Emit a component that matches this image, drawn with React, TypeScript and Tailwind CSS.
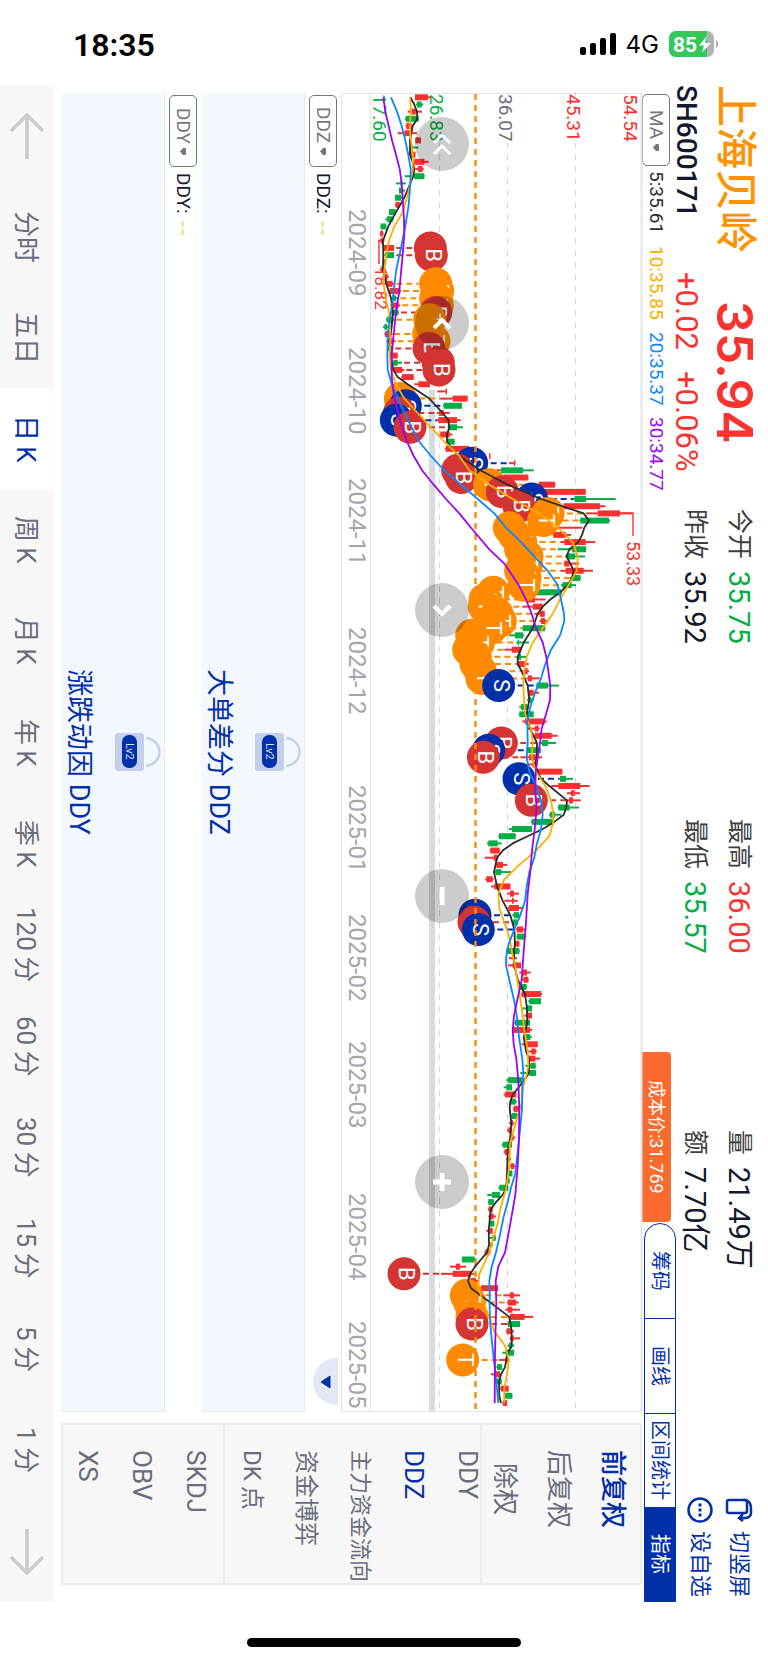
import { Fragment } from 'react';
import type { ReactNode } from 'react';

type Candle = ['r' | 'g', number, number, number, number];
type Point = [number, number];

const UP = '#f93030';
const DOWN = '#06ae46';

// colour, low, body start, body end, high
const candles: Candle[] = [
  ['r', 162, 162, 201, 210], ['g', 165, 168, 182, 187], ['r', 140, 152, 164, 183], ['g', 132, 134, 173, 173],
  ['r', 134, 136, 152, 152], ['r', 110, 131, 146, 168], ['r', 163, 163, 180, 180], ['g', 145, 147, 155, 172],
  ['r', 145, 148, 163, 163], ['r', 160, 160, 190, 203], ['r', 163, 171, 185, 188], ['g', 131, 160, 190, 190],
  ['g', 105, 118, 124, 134], ['g', 113, 114, 126, 132], ['g', 102, 102, 121, 124], ['r', 102, 104, 116, 120],
  ['g', 84, 84, 104, 106], ['g', 73, 78, 95, 98], ['g', 58, 59, 76, 76], ['r', 56, 58, 66, 68],
  ['r', 52, 60, 66, 70], ['r', 68, 69, 99, 100], ['g', 70, 72, 99, 100], ['g', 64, 66, 74, 76],
  ['r', 56, 60, 70, 74], ['r', 64, 66, 80, 84], ['r', 74, 78, 95, 100], ['r', 82, 86, 118, 120],
  ['g', 90, 95, 105, 112], ['r', 88, 95, 113, 118], ['g', 90, 94, 112, 114], ['g', 75, 77, 97, 100],
  ['g', 66, 70, 78, 84], ['r', 70, 72, 92, 94], ['r', 76, 84, 96, 104], ['g', 78, 82, 94, 97],
  ['r', 88, 94, 110, 110], ['g', 90, 97, 110, 123], ['r', 94, 99, 124, 130], ['r', 121, 123, 158, 158],
  ['r', 160, 172, 207, 207], ['r', 229, 254, 258, 258], ['r', 236, 275, 320, 320], ['g', 246, 248, 303, 303],
  ['r', 228, 234, 248, 266], ['r', 230, 232, 288, 299], ['g', 260, 262, 288, 306], ['r', 236, 238, 266, 274],
  ['g', 256, 258, 281, 281], ['r', 252, 254, 324, 324], ['r', 384, 384, 388, 388], ['r', 444, 459, 463, 463],
  ['g', 418, 420, 486, 518], ['r', 426, 428, 502, 502], ['r', 532, 533, 582, 584], ['r', 548, 550, 674, 674],
  ['g', 636, 641, 675, 764], ['r', 606, 608, 717, 733], ['r', 675, 710, 777, 816], ['g', 656, 658, 744, 748],
  ['r', 554, 555, 583, 664], ['r', 575, 577, 614, 630], ['r', 600, 610, 674, 703], ['g', 590, 634, 675, 676],
  ['g', 612, 616, 642, 672], ['r', 608, 610, 625, 654], ['r', 600, 614, 668, 696], ['g', 626, 632, 658, 660],
  ['g', 600, 604, 632, 645], ['g', 504, 506, 602, 602], ['r', 483, 495, 522, 554], ['r', 484, 516, 545, 546],
  ['r', 520, 536, 551, 552], ['r', 536, 540, 552, 558], ['g', 484, 485, 552, 554], ['g', 444, 462, 486, 490],
  ['g', 466, 470, 474, 504], ['r', 430, 452, 480, 482], ['g', 466, 472, 480, 495], ['r', 466, 470, 491, 503],
  ['r', 488, 492, 500, 504], ['r', 497, 501, 513, 536], ['g', 524, 527, 561, 594], ['r', 500, 503, 518, 534],
  ['g', 498, 503, 511, 518], ['g', 475, 480, 500, 502], ['g', 474, 475, 518, 518], ['r', 484, 492, 551, 557],
  ['r', 500, 522, 533, 536], ['r', 518, 521, 572, 590], ['g', 540, 543, 561, 585], ['g', 495, 497, 539, 540],
  ['r', 478, 504, 524, 543], ['r', 500, 514, 522, 530], ['r', 523, 525, 604, 604], ['g', 595, 597, 615, 636],
  ['r', 570, 592, 658, 686], ['r', 618, 630, 641, 657], ['r', 610, 624, 636, 659], ['g', 590, 592, 626, 654],
  ['g', 564, 567, 582, 600], ['g', 510, 512, 578, 578], ['g', 444, 453, 513, 513], ['g', 412, 414, 464, 464],
  ['g', 378, 382, 410, 422], ['r', 386, 388, 416, 416], ['r', 371, 398, 410, 412], ['r', 404, 406, 426, 438],
  ['g', 402, 404, 421, 450], ['r', 373, 376, 395, 398], ['r', 390, 400, 448, 448], ['r', 438, 447, 459, 474],
  ['r', 430, 453, 458, 470], ['r', 440, 444, 474, 487], ['g', 454, 458, 474, 476], ['g', 453, 456, 470, 471],
  ['r', 465, 468, 486, 496], ['g', 466, 468, 492, 496], ['r', 458, 460, 475, 475], ['g', 436, 436, 475, 476],
  ['r', 444, 455, 460, 468], ['r', 440, 455, 480, 480], ['r', 475, 484, 498, 509], ['r', 484, 488, 502, 503],
  ['g', 474, 476, 497, 497], ['r', 480, 482, 540, 543], ['g', 502, 505, 540, 540], ['g', 482, 496, 513, 513],
  ['r', 490, 497, 513, 513], ['g', 460, 462, 507, 507], ['r', 455, 456, 507, 514], ['g', 490, 494, 508, 512],
  ['r', 482, 493, 530, 530], ['r', 502, 511, 524, 527], ['r', 500, 504, 523, 537], ['g', 493, 508, 524, 524],
  ['g', 478, 505, 525, 525], ['g', 436, 441, 484, 484], ['g', 428, 436, 453, 453], ['r', 428, 432, 466, 466],
  ['g', 446, 450, 464, 468], ['r', 456, 458, 474, 474], ['g', 448, 452, 468, 468], ['r', 444, 450, 456, 460],
  ['r', 438, 442, 452, 452], ['r', 446, 450, 458, 462], ['g', 422, 425, 453, 453], ['r', 428, 431, 448, 448],
  ['r', 436, 442, 448, 450], ['r', 444, 450, 460, 464], ['g', 438, 441, 454, 454], ['g', 436, 440, 446, 446],
  ['g', 412, 415, 442, 442], ['g', 379, 393, 417, 417], ['g', 381, 382, 399, 399], ['r', 381, 383, 395, 395],
  ['r', 382, 386, 398, 405], ['g', 386, 387, 400, 400], ['r', 376, 384, 395, 395], ['g', 386, 394, 404, 405],
  ['g', 385, 388, 392, 396], ['r', 370, 373, 386, 389], ['g', 302, 303, 341, 347], ['r', 267, 285, 297, 315],
  ['r', 240, 275, 330, 340], ['r', 320, 328, 345, 352], ['r', 358, 360, 411, 411], ['r', 427, 446, 459, 477],
  ['r', 438, 441, 465, 473], ['r', 433, 440, 454, 477], ['r', 440, 447, 491, 517], ['g', 438, 441, 477, 477],
  ['r', 435, 437, 452, 459], ['r', 446, 448, 458, 477], ['g', 440, 444, 454, 460], ['g', 424, 434, 459, 459],
  ['r', 414, 433, 440, 440], ['g', 406, 408, 423, 423], ['r', 390, 402, 417, 417], ['g', 406, 408, 422, 422],
  ['r', 416, 420, 443, 443], ['g', 428, 431, 454, 454], ['r', 424, 426, 438, 438],
];

const ma5: Point[] = [
  [0, 148], [1, 160], [2, 168], [3, 169], [4, 155], [6, 147], [8, 147], [9, 155], [10, 160], [11, 157], [12, 148], [14, 130],
  [16, 105], [18, 82], [20, 66], [22, 67], [24, 66], [26, 76], [28, 90], [30, 96], [32, 92], [34, 84], [36, 90], [38, 97],
  [39, 110], [40, 140], [42, 205], [44, 245], [45, 262], [46, 265], [47, 258], [48, 258], [49, 272], [50, 295], [52, 358],
  [54, 440], [56, 540], [58, 668], [59, 684], [60, 670], [61, 663], [62, 652], [63, 625], [64, 617], [65, 628], [66, 638],
  [67, 633], [68, 620], [69, 598], [70, 568], [71, 545], [72, 530], [74, 515], [76, 488], [78, 470], [79, 470], [80, 482],
  [82, 500], [84, 505], [86, 497], [88, 507], [90, 528], [92, 527], [93, 522], [94, 530], [95, 540], [96, 565], [98, 618],
  [99, 616], [100, 608], [101, 580], [102, 545], [103, 500], [104, 455], [105, 425], [106, 408], [108, 399], [110, 408],
  [112, 425], [114, 448], [116, 460], [118, 462], [119, 459], [121, 460], [123, 470], [125, 492], [127, 498], [129, 499],
  [131, 488], [133, 495], [134, 504], [136, 504], [137, 490], [138, 473], [139, 455], [140, 448], [141, 446], [143, 451],
  [145, 448], [147, 440], [150, 438], [152, 436], [153, 425], [154, 405], [155, 390], [156, 387], [158, 383], [160, 384],
  [161, 378], [162, 360], [163, 342], [164, 328], [165, 321], [166, 330], [168, 388], [170, 445], [172, 452], [174, 452],
  [175, 440], [177, 432], [178, 420], [179, 414], [181, 415], [182, 420],
];

const ma10: Point[] = [
  [0, 147], [2, 150], [4, 146], [6, 150], [8, 155], [10, 155], [12, 148], [14, 138], [16, 125], [18, 100], [20, 84], [22, 76],
  [24, 70], [26, 68], [28, 74], [30, 84], [32, 87], [34, 88], [36, 86], [38, 90], [40, 105], [42, 130], [44, 170], [46, 210],
  [48, 250], [50, 295], [52, 325], [54, 385], [56, 455], [58, 535], [60, 590], [62, 635], [64, 650], [66, 648], [68, 622],
  [70, 597], [72, 575], [74, 545], [76, 515], [78, 497], [80, 490], [82, 487], [84, 489], [86, 493], [88, 510], [90, 515],
  [92, 512], [94, 525], [96, 553], [98, 570], [100, 577], [101, 577], [103, 565], [105, 525], [107, 475], [109, 430],
  [111, 412], [113, 415], [116, 437], [117, 445], [119, 452], [121, 462], [124, 472], [127, 482], [130, 490], [133, 500],
  [135, 502], [136, 498], [138, 486], [140, 483], [142, 470], [144, 458], [146, 446], [149, 445], [152, 436], [155, 418],
  [157, 410], [159, 397], [161, 385], [163, 365], [164, 355], [166, 352], [168, 368], [170, 384], [172, 400], [174, 432],
  [176, 444], [178, 438], [180, 430], [182, 430],
];

const ma20: Point[] = [
  [0, 90], [2, 108], [4, 122], [6, 133], [8, 142], [10, 149], [12, 148], [15, 143], [18, 133], [21, 120], [24, 106], [27, 98],
  [30, 90], [33, 80], [36, 79], [38, 80], [40, 92], [43, 120], [46, 152], [48, 175], [50, 210], [52, 250], [54, 300],
  [56, 350], [58, 400], [60, 435], [62, 480], [64, 520], [66, 560], [68, 590], [70, 600], [72, 609], [73, 610], [75, 597],
  [77, 570], [79, 553], [81, 540], [83, 522], [85, 508], [87, 499], [90, 500], [92, 497], [94, 505], [96, 525], [98, 540],
  [100, 545], [102, 540], [104, 528], [106, 520], [108, 505], [110, 497], [112, 492], [114, 478], [116, 460], [118, 443],
  [120, 435], [121, 435], [123, 445], [126, 460], [128, 467], [131, 474], [134, 484], [136, 487], [138, 484], [141, 483],
  [144, 477], [147, 470], [150, 463], [152, 450], [154, 440], [156, 428], [159, 415], [161, 405], [163, 392], [165, 385],
  [167, 386], [169, 386], [171, 388], [174, 394], [177, 401], [180, 408], [182, 412],
];

const ma30: Point[] = [
  [0, 67], [2, 73], [4, 83], [6, 93], [8, 105], [10, 116], [12, 122], [14, 125], [17, 129], [19, 130], [21, 127], [24, 121],
  [27, 115], [30, 105], [33, 98], [36, 92], [39, 92], [42, 100], [44, 112], [46, 123], [48, 138], [50, 158], [52, 183],
  [54, 218], [56, 255], [58, 295], [60, 330], [63, 385], [65, 430], [68, 473], [70, 495], [72, 512], [74, 525], [76, 545],
  [78, 556], [80, 562], [82, 568], [84, 567], [86, 555], [88, 542], [90, 537], [92, 530], [94, 524], [97, 523], [99, 527],
  [102, 521], [105, 513], [108, 508], [111, 500], [115, 495], [119, 488], [123, 482], [126, 468], [128, 459], [130, 455],
  [132, 458], [134, 466], [137, 472], [141, 475], [145, 474], [149, 470], [153, 463], [157, 448], [159, 440], [161, 432],
  [163, 412], [165, 404], [168, 406], [171, 404], [175, 402], [182, 401],
];

// candle index, price position, trade type
const trades: [number, number, 'B' | 'S' | 'T'][] = [
  [21, 208, 'B'], [22, 211, 'B'], [26, 224, 'T'], [27, 230, 'T'], [28, 224, 'T'], [29, 229, 'T'], [30, 224, 'B'],
  [31, 206, 'T'], [33, 203, 'T'], [34, 219, 'T'], [35, 204, 'B'], [37, 232, 'B'], [38, 234, 'B'], [42, 118, 'T'],
  [43, 133, 'S'], [44, 115, 'B'], [45, 106, 'S'], [46, 147, 'B'], [51, 332, 'S'], [52, 290, 'B'], [53, 301, 'B'],
  [54, 386, 'T'], [55, 424, 'B'], [56, 512, 'S'], [57, 474, 'B'], [58, 561, 'T'], [59, 548, 'T'], [60, 445, 'T'],
  [61, 460, 'T'], [62, 479, 'T'], [63, 479, 'T'], [64, 498, 'T'], [65, 497, 'T'], [66, 479, 'T'], [67, 492, 'T'],
  [68, 489, 'T'], [69, 397, 'T'], [70, 372, 'T'], [71, 370, 'T'], [72, 408, 'T'], [73, 418, 'T'], [74, 390, 'T'],
  [75, 332, 'T'], [76, 352, 'T'], [77, 323, 'T'], [78, 343, 'T'], [79, 345, 'T'], [80, 358, 'T'], [81, 363, 'T'],
  [82, 413, 'S'], [90, 421, 'B'], [91, 383, 'S'], [92, 367, 'B'], [95, 474, 'S'], [98, 511, 'B'], [114, 342, 'S'],
  [115, 339, 'B'], [116, 352, 'S'], [164, 129, 'B'], [167, 316, 'T'], [168, 326, 'T'], [170, 333, 'T'],
  [171, 333, 'B'], [176, 305, 'T'],
];

const tradeColors = { B: '#d43434', S: '#0230a8', T: '#ff8a00' };

const months: [string, number][] = [
  ['2024-09', 209], ['2024-10', 347], ['2024-11', 478], ['2024-12', 627], ['2025-01', 785],
  ['2025-02', 914], ['2025-03', 1041], ['2025-04', 1193], ['2025-05', 1321],
];

const priceLabels: [string, number, string][] = [
  ['54.54', 623, UP], ['45.31', 566, UP], ['36.07', 498, '#6b6d7c'], ['26.83', 429, DOWN], ['17.60', 372, DOWN],
];

const periods = ['分时', '五日', '日\u2009K', '周\u2009K', '月\u2009K', '年\u2009K', '季\u2009K', '120\u2009分', '60\u2009分', '30\u2009分', '15\u2009分', '5\u2009分', '1\u2009分'];

const px = (t: number) => 360 + t / 3;
const py = (i: number) => 97.3 + i * 7.174;
const line = (points: Point[]) => points.map(([i, t]) => `${px(t).toFixed(1)},${py(i).toFixed(1)}`).join(' ');

function Label({ x, y, size, fill, children }: { x: number; y: number; size: number; fill: string; children: ReactNode }) {
  return (
    <text transform={`translate(${x} ${y}) rotate(90)`} fontSize={size} fill={fill}>
      {children}
    </text>
  );
}

function KLineChart() {
  return (
    <svg viewBox="340 93 301 1319" className="block h-full w-full overflow-visible [writing-mode:horizontal-tb]" role="img" aria-label="日K">
      {/* Frame and grid */}
      <path d="M340.5 93.5H641M340.5 93v1319M369.5 93v1319M340 1411.5h301" stroke="#e4e5e7" fill="none" />
      <path d="M640.5 93v1319" stroke="#e4e5e7" strokeWidth="2" />
      <path d="M438.5 94v1318M506.5 94v1318M574.5 94v1318" stroke="#d3d6da" strokeDasharray="6 6" />
      <rect x="428" y="390" width="6" height="1022" fill="#d6dbdf" />

      {priceLabels.map(([text, x, fill]) => (
        <Fragment key={text}>
          <rect x={x - 2} y="95" width="17" height="48" fill="#fff" />
          <Label x={x} y={94} size={19} fill={fill}>{text}</Label>
        </Fragment>
      ))}
      {months.map(([text, y]) => (
        <Label key={text} x={348} y={y} size={24} fill="#a5a5ad">{text}</Label>
      ))}

      {/* Candles */}
      {candles.map(([c, low, a, b, high], i) => (
        <g key={i} fill={c === 'r' ? UP : DOWN}>
          <rect x={px(low)} y={py(i) - 1} width={(high - low) / 3} height="2" />
          <rect x={px(a)} y={py(i) - 3} width={(b - a) / 3} height="6" />
        </g>
      ))}

      {/* High and low */}
      <path d="M618 513.3h14V536M382 238l-4 3v23" stroke={UP} strokeWidth="1.4" fill="none" />
      <Label x={626} y={541} size={18} fill={UP}>53.33</Label>
      <Label x={374} y={267} size={17} fill={UP}>18.82</Label>

      {/* Trades */}
      {trades.map(([i, t, type]) => {
        const [, low, , , high] = candles[i];
        const above = t > high;
        return (
          <line
            key={i}
            x1={above ? px(high) + 2 : px(t) + 19}
            x2={above ? px(t) - 17 : Math.max(px(low), px(t) + 19)}
            y1={py(i)}
            y2={py(i)}
            stroke={tradeColors[type]}
            strokeWidth="2"
            strokeDasharray="6 4"
          />
        );
      })}
      {trades.map(([i, t, type]) => (
        <g key={i}>
          <circle cx={px(t)} cy={py(i)} r="16.5" fill={tradeColors[type]} />
          <text transform={`translate(${px(t) - 5} ${py(i)}) rotate(90)`} fontSize="22" textAnchor="middle" fill="#fff">
            {type}
          </text>
        </g>
      ))}

      {/* Cost line */}
      <path d="M474.5 94v1318" stroke="#ff8a00" strokeWidth="2.4" strokeDasharray="6 5" />

      <g fill="none" strokeWidth="1.8" strokeLinejoin="round">
        <polyline points={line(ma5)} stroke="#2d2d2d" />
        <polyline points={line(ma10)} stroke="#ffae00" />
        <polyline points={line(ma20)} stroke="#0a87ff" />
        <polyline points={line(ma30)} stroke="#9a05f5" />
      </g>
    </svg>
  );
}

function ChartButton({ label, path, className, width = 3 }: { label: string; path: string; className: string; width?: number }) {
  return (
    <button aria-label={label} className={`absolute left-[74px] flex size-[54px] items-center justify-center rounded-full bg-black/20 ${className}`}>
      <svg viewBox="0 0 54 54" className="size-full" fill="none" stroke="#fff" strokeWidth={width}>
        <path d={path} />
      </svg>
    </button>
  );
}

function IndicatorSelect({ value }: { value: string }) {
  return (
    <label className="flex h-[72px] w-[28px] shrink-0 items-center justify-center gap-1 rounded-[5px] border border-[#74767f] text-[19px] leading-6 text-[#74767f]">
      <select aria-label={value} className="appearance-none bg-transparent outline-none">
        <option>{value}</option>
      </select>
      <svg viewBox="0 0 6 7" className="h-[7px] w-[6px]" fill="#74767f">
        <path d="M3 0h2q1 0 1 1v5q0 1-1 1H3L0 3.5z" />
      </svg>
    </label>
  );
}

function Quote({ label, value, color }: { label: string; value: string; color: string }) {
  return (
    <div className="flex gap-x-3">
      <dt className="text-[25px] text-[#3f3f42]">{label}</dt>
      <dd className={`text-[29px] ${color}`}>{value}</dd>
    </div>
  );
}

function LockedPanel({ name, title }: { name: string; title: string }) {
  return (
    <section className="flex min-w-0 flex-1 flex-col">
      <div className="flex w-9 shrink-0 items-center gap-x-1 pt-[2px]">
        <IndicatorSelect value={name} />
        <span className="pt-[2px] text-[19px] text-[#15172c]">{name}:</span>
        <span className="pt-[2px] font-[Inter] text-[18px] text-[#e5db4a]">--</span>
      </div>
      <div className="flex flex-1 flex-col items-center border-r border-b border-[#e6e9ee] bg-[#f3f8ff] pr-[2px]">
        <svg viewBox="0 0 47 38" className="h-[38px] w-[47px] shrink-0 [writing-mode:horizontal-tb]">
          <rect width="29" height="38" rx="3" fill="#c3cfec" />
          <rect x="7" y="2" width="15" height="33" rx="7" fill="#0230a8" />
          <text transform="translate(10.500 10) rotate(90)" fontSize="11" fill="#d6dff6">Lv2</text>
          <path d="M31 5c18 2 18 26 0 28" fill="none" stroke="#c3cfec" strokeWidth="2.400" />
        </svg>
        <h2 className="mr-[20px] text-[27px] leading-[32px] text-[#0230a8]">{title}</h2>
      </div>
    </section>
  );
}

function SideItem({ text, active, className }: { text: string; active?: boolean; className: string }) {
  return (
    <button className={`w-[54px] shrink-0 whitespace-nowrap ${active ? 'text-[#0230a8]' : 'text-[#6b6d7c]'} ${className}`}>
      {text}
    </button>
  );
}

function StatusBar() {
  return (
    <div className="flex h-[85px] shrink-0 items-center justify-between pt-[3px] pr-[49px] pl-[73px]">
      <span className="pt-[2px] text-[32px] leading-none font-semibold">18:35</span>
      <div className="flex items-center gap-[10px]">
        <svg viewBox="0 0 36 22" className="h-[22px] w-9">
          <rect y="14" width="6" height="8" rx="2" />
          <rect x="10" y="10" width="6" height="12" rx="2" />
          <rect x="20" y="5" width="6" height="17" rx="2" />
          <rect x="30" width="6" height="22" rx="2" />
        </svg>
        <span className="pt-[2px] font-[Inter] text-[24px] leading-none">4G</span>
        <svg viewBox="0 0 50 26" className="h-[26px] w-[50px]">
          <clipPath id="battery">
            <rect width="45" height="26" rx="7" />
          </clipPath>
          <g clipPath="url(#battery)">
            <rect width="45" height="26" fill="#b1b1b3" />
            <rect width="38" height="26" fill="#34c759" />
          </g>
          <path d="M47 9c3 1 3 7 0 8z" fill="#b1b1b3" />
          <text x="4" y="20.500" fontSize="21" fontWeight="700" fill="#fff">85</text>
          <path d="M38 5L30 14.500h5L33 21.500 42 12h-6z" fill="#fff" />
        </svg>
      </div>
    </div>
  );
}

export default function App() {
  return (
    <div className="flex min-h-screen flex-col overflow-hidden bg-white font-[Roboto,'Noto_Sans_CJK_SC',sans-serif] text-black">
      <StatusBar />

      <main className="flex min-h-0 flex-1 flex-col [text-orientation:sideways] [writing-mode:vertical-rl]">
        {/* Quote header */}
        <header className="flex w-[91px] shrink-0 whitespace-nowrap">
          <div className="h-[187px] pr-[7px]">
            <h1 className="text-[42px] leading-[52px] font-medium text-[#ff9200]">上海贝岭</h1>
            <p className="mr-[13px] text-[28px] leading-[20px] font-medium text-[#15172c]">SH600171</p>
          </div>
          <div className="h-[200px] pr-[7px]">
            <p className="text-center font-[Inter] text-[50px] leading-[52px] font-semibold text-[#fa332e]">35.94</p>
            <p className="mr-[13px] flex justify-between text-[31px] leading-[20px] text-[#fa332e]">
              <span>+0.02</span>
              <span>+0.06%</span>
            </p>
          </div>
          <dl className="mt-[37px] grid min-h-0 flex-1 auto-cols-fr grid-flow-col grid-rows-[30px_30px] content-start gap-y-[14px] pr-[14px] leading-[30px]">
            <Quote label="今开" value="35.75" color="text-[#06ae46]" />
            <Quote label="昨收" value="35.92" color="text-[#15172c]" />
            <Quote label="最高" value="36.00" color="text-[#fa332e]" />
            <Quote label="最低" value="35.57" color="text-[#06ae46]" />
            <Quote label="量" value="21.49万" color="text-[#15172c]" />
            <Quote label="额" value="7.70亿" color="text-[#15172c]" />
          </dl>
          <div className="flex h-[162px] flex-col gap-y-[9px] pt-[57px] pr-[14px] text-[22px] leading-[30px] text-[#0230a8]">
            <button className="flex items-center gap-x-2">
              <svg viewBox="0 0 28 26" className="h-[26px] w-7" fill="none" stroke="#0230a8" strokeWidth="2.500">
                <rect x="2" y="3" width="20" height="13" rx="2" />
                <path d="M18 3h2q6 1 6 8v5q0 4-5 5h-6M18 17l-4 4 4 3" />
              </svg>
              切竖屏
            </button>
            <button className="flex items-center gap-x-2">
              <svg viewBox="0 0 26 26" className="size-[26px]" fill="none" stroke="#0230a8" strokeWidth="2.500">
                <circle cx="13" cy="13" r="11.500" />
                <path d="M13 6.500v3M13 11.500v3M13 16.500v3" strokeWidth="3" />
              </svg>
              设自选
            </button>
          </div>
        </header>

        {/* Averages and chart tools */}
        <div className="flex w-[35px] shrink-0 items-end pt-[9px] text-[18px] leading-[29px] whitespace-nowrap">
          <IndicatorSelect value="MA" />
          <div className="flex flex-1 gap-x-3 pt-[5px] text-[19px]">
            <span className="text-[#2d2d2d]">5:35.61</span>
            <span className="text-[#ffae00]">10:35.85</span>
            <span className="text-[#0a87ff]">20:35.37</span>
            <span className="text-[#9a05f5]">30:34.77</span>
          </div>
          <span className="h-[170px] rounded-r-[4px] bg-[#fa6b30] text-center text-white">成本价:31.769</span>
          <div className="mt-px grid h-[379px] w-8 grid-cols-4 self-center overflow-hidden rounded-t-[16px] border border-[#0230a8] text-[20px] text-[#0230a8]">
            <button>筹码</button>
            <button className="border-t border-[#0230a8]">画线</button>
            <button className="border-t border-[#0230a8]">区间统计</button>
            <button className="bg-[#0230a8] text-white">指标</button>
          </div>
        </div>

        <div className="flex min-w-0 flex-1 pt-2 pb-[17px] pl-[7px]">
          <div className="flex min-h-0 flex-1 flex-col">
            <div className="relative w-[301px] shrink-0">
              <KLineChart />
              <ChartButton label="最早" className="top-[24px]" path="M19 26l8-8 8 8M19 37l8-8 8 8" />
              <ChartButton label="向前" className="top-[203px]" width={4} path="M19 32l8-8 8 8" />
              <ChartButton label="向后" className="top-[490px]" width={4} path="M19 23l8 8 8-8" />
              <ChartButton label="缩小" className="top-[776px]" width={5} path="M27 18v18" />
              <ChartButton label="放大" className="top-[1062px]" width={5} path="M27 18v18M18 27h18" />
            </div>
            <div className="relative flex min-w-0 flex-1 flex-col">
              <LockedPanel name="DDZ" title="大单差分 DDZ" />
              <LockedPanel name="DDY" title="涨跌动因 DDY" />
              <button aria-label="展开" className="absolute right-[3px] bottom-[7px] flex h-[47px] w-[25px] items-center justify-center rounded-l-full bg-[#e3e8f5]">
                <svg viewBox="0 0 11 14" className="h-[14px] w-[11px]" fill="#0230a8" stroke="#0230a8" strokeLinejoin="round">
                  <path d="M10 1v12L1 7z" />
                </svg>
              </button>
            </div>
          </div>

          {/* Indicator list */}
          <aside className="mt-[11px] flex h-[162px] shrink-0 flex-col border-2 border-[#ececed] bg-[#f7f7f8] text-[26px] leading-[54px]">
            <div className="flex w-[158px] shrink-0 flex-col items-start pt-[24px]">
              <SideItem text="前复权" active className="h-[80px] text-center font-medium" />
              <SideItem text="后复权" className="h-[80px] text-center" />
              <SideItem text="除权" className="h-[80px] text-center" />
            </div>
            <div className="flex min-w-0 flex-1 flex-col justify-end border-r-2 border-[#ececed] pt-[25px]">
              <SideItem text="DDY" className="text-start" />
              <SideItem text="DDZ" active className="text-start" />
              <SideItem text="主力资金流向" className="text-start text-[22px]" />
              <SideItem text="资金博弈" className="text-start text-[24px]" />
              <SideItem text={'DK\u2009点'} className="text-start text-[24px]" />
            </div>
            <div className="flex w-[162px] shrink-0 flex-col border-r-2 border-[#ececed] pt-[25px]">
              <SideItem text="SKDJ" className="text-start" />
              <SideItem text="OBV" className="text-start" />
              <SideItem text="XS" className="text-start" />
            </div>
          </aside>
        </div>

        {/* Periods */}
        <nav className="flex w-[54px] shrink-0 bg-[#f7f7f8] text-[26px] text-[#6b6d7c]">
          <button aria-label="上一页" className="flex flex-1 basis-0 items-center justify-center">
            <svg viewBox="0 0 36 46" className="h-[46px] w-9" fill="none" stroke="#ccc" strokeWidth="3.500">
              <path d="M18 46V2M2 18L18 2l16 16" />
            </svg>
          </button>
          {periods.map((period, i) => (
            <button key={period} className={`min-h-0 flex-1 basis-0 pr-[3px] whitespace-nowrap ${i === 2 ? 'bg-white text-[#0230a8]' : ''}`}>
              {period}
            </button>
          ))}
          <button aria-label="下一页" className="flex flex-1 basis-0 items-center justify-center">
            <svg viewBox="0 0 36 46" className="h-[46px] w-9" fill="none" stroke="#ccc" strokeWidth="3.500">
              <path d="M18 0v44M2 28l16 16 16-16" />
            </svg>
          </button>
        </nav>
      </main>

      <div className="flex h-[60px] shrink-0 items-end justify-center pb-[15px]">
        <div className="h-[9px] w-[274px] rounded-full bg-black" />
      </div>
    </div>
  );
}
